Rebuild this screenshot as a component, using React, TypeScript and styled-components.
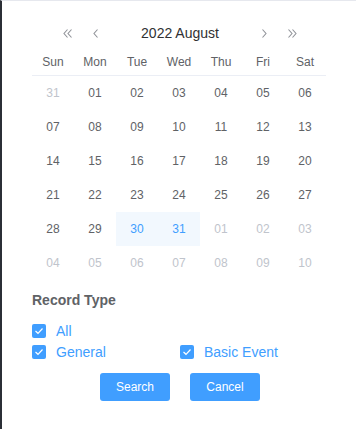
import React from "react";
import styled, { createGlobalStyle } from "styled-components";

const Global = createGlobalStyle`
  html, body { margin: 0; padding: 0; background: #ffffff; }
  body { font-family: "Liberation Sans", Arial, Helvetica, sans-serif; }
  * { box-sizing: border-box; }
`;

const Panel = styled.div`
  width: 356px;
  height: 429px;
  background: #ffffff;
  border-left: 2px solid #2b2f36;
  border-top: 1px solid #e6e8ee;
  padding: 17px 28px 0 30px;
  display: flex;
  flex-direction: column;
`;

const Header = styled.div`
  display: grid;
  grid-template-columns: 28px 28px 140px 28px 28px;
  justify-content: center;
  align-items: center;
  height: 30px;
`;

const NavBtn = styled.span`
  display: flex;
  align-items: center;
  justify-content: center;
  color: #909399;
  height: 30px;
`;

const Title = styled.span`
  text-align: center;
  font-size: 14px;
  color: #303133;
`;

const Grid = styled.div`
  display: grid;
  grid-template-columns: repeat(7, 42px);
`;

const WeekCell = styled.div`
  height: 28px;
  display: flex;
  align-items: center;
  justify-content: center;
  font-size: 12px;
  color: #606266;
  border-bottom: 1px solid #ebeef5;
`;

const DayCell = styled.div<{ $muted?: boolean; $inRange?: boolean }>`
  height: 34px;
  display: flex;
  align-items: center;
  justify-content: center;
  font-size: 12px;
  color: ${(p) => (p.$muted ? "#c0c4cc" : p.$inRange ? "#409eff" : "#606266")};
  background: ${(p) => (p.$inRange ? "#f2f8fe" : "transparent")};
`;

const SectionTitle = styled.div`
  margin-top: 10px;
  font-size: 14px;
  line-height: 20px;
  font-weight: bold;
  color: #606266;
`;

const CheckGroup = styled.div`
  margin-top: 11px;
  display: grid;
  grid-template-columns: 148px auto;
  row-gap: 1px;
`;

const CheckItem = styled.label<{ $full?: boolean }>`
  display: flex;
  align-items: center;
  height: 20px;
  grid-column: ${(p) => (p.$full ? "1 / -1" : "auto")};
  font-size: 14px;
  color: #409eff;
`;

const Box = styled.span`
  width: 14px;
  height: 14px;
  border-radius: 2px;
  background: #409eff;
  display: flex;
  align-items: center;
  justify-content: center;
  margin-right: 10px;
`;

const Buttons = styled.div`
  margin-top: 11px;
  display: flex;
  justify-content: center;
  gap: 20px;
`;

const Button = styled.button`
  width: 70px;
  height: 28px;
  border: none;
  border-radius: 3px;
  background: #409eff;
  color: #ffffff;
  font-family: "Liberation Sans", Arial, sans-serif;
  font-size: 12px;
  padding: 0;
`;

const Chevron = ({ dir, double }: { dir: "l" | "r"; double?: boolean }) => {
  const paths =
    dir === "l"
      ? double
        ? ["M5.5 1.5 L2 5.5 L5.5 9.5", "M9.5 1.5 L6 5.5 L9.5 9.5"]
        : ["M5.5 1.5 L2 5.5 L5.5 9.5"]
      : double
      ? ["M2.5 1.5 L6 5.5 L2.5 9.5", "M6.5 1.5 L10 5.5 L6.5 9.5"]
      : ["M2.5 1.5 L6 5.5 L2.5 9.5"];
  const w = double ? 12 : 8;
  return (
    <svg width={w} height="11" viewBox={`0 0 ${w} 11`} fill="none">
      {paths.map((d, i) => (
        <path key={i} d={d} stroke="currentColor" strokeWidth="1.1" />
      ))}
    </svg>
  );
};

const Check = () => (
  <svg width="10" height="8" viewBox="0 0 10 8" fill="none">
    <path d="M1.5 4 L4 6.3 L8.5 1.5" stroke="#fff" strokeWidth="1.2" />
  </svg>
);

const weeks = ["Sun", "Mon", "Tue", "Wed", "Thu", "Fri", "Sat"];

type Day = { n: string; muted?: boolean; range?: boolean };
const days: Day[] = [];
days.push({ n: "31", muted: true });
for (let i = 1; i <= 31; i++) {
  days.push({ n: String(i).padStart(2, "0"), range: i === 30 || i === 31 });
}
for (let i = 1; i <= 10; i++) days.push({ n: String(i).padStart(2, "0"), muted: true });

export default function App() {
  return (
    <>
      <Global />
      <Panel>
        <Header>
          <NavBtn><Chevron dir="l" double /></NavBtn>
          <NavBtn><Chevron dir="l" /></NavBtn>
          <Title>2022 August</Title>
          <NavBtn><Chevron dir="r" /></NavBtn>
          <NavBtn><Chevron dir="r" double /></NavBtn>
        </Header>
        <Grid>
          {weeks.map((w) => (
            <WeekCell key={w}>{w}</WeekCell>
          ))}
          {days.map((d, i) => (
            <DayCell key={i} $muted={d.muted} $inRange={d.range}>
              {d.n}
            </DayCell>
          ))}
        </Grid>
        <SectionTitle>Record Type</SectionTitle>
        <CheckGroup>
          <CheckItem $full><Box><Check /></Box>All</CheckItem>
          <CheckItem><Box><Check /></Box>General</CheckItem>
          <CheckItem><Box><Check /></Box>Basic Event</CheckItem>
        </CheckGroup>
        <Buttons>
          <Button>Search</Button>
          <Button>Cancel</Button>
        </Buttons>
      </Panel>
    </>
  );
}
